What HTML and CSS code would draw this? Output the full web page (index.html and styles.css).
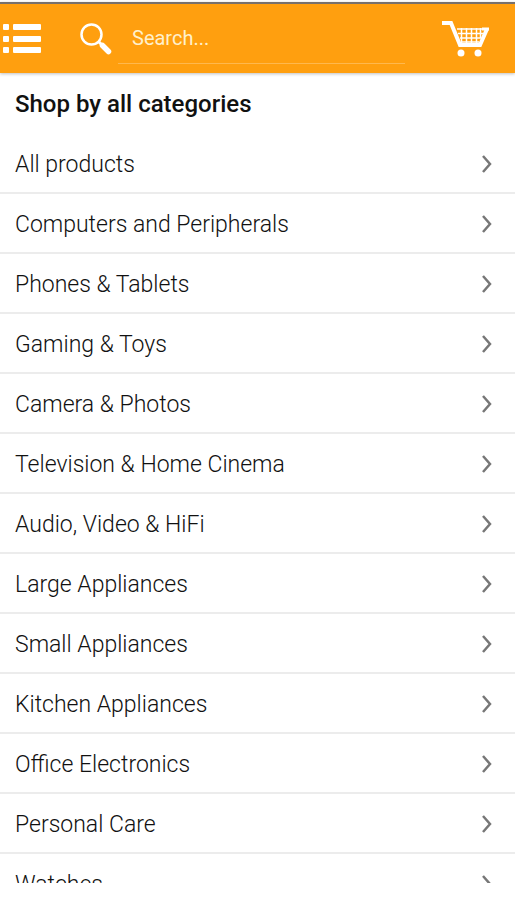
FILE: index.html
```html
<!DOCTYPE html>
<html lang="en">
<head>
  <meta charset="UTF-8" />
  <meta name="viewport" content="width=device-width, initial-scale=1.0" />
  <title>Shop by all categories</title>
  <link rel="stylesheet" href="styles.css">
</head>
<body>
  <header class="topbar">
    <button class="icon-btn menu-btn" type="button" aria-label="Menu">
      <svg width="38" height="30" viewBox="0 0 38 30" fill="#fff">
        <rect x="0" y="0" width="6" height="6" rx="1" />
        <rect x="10" y="0" width="28" height="6" rx="1" />
        <rect x="0" y="12" width="6" height="6" rx="1" />
        <rect x="10" y="12" width="28" height="6" rx="1" />
        <rect x="0" y="23" width="6" height="6" rx="1" />
        <rect x="10" y="23" width="28" height="6" rx="1" />
      </svg>
    </button>
    <form class="search">
      <button class="icon-btn" type="submit" aria-label="Submit search">
        <svg width="32" height="32" viewBox="0 0 32 32" fill="none" stroke="#fff">
          <circle cx="11.5" cy="11.5" r="10" stroke-width="2.5" />
          <path d="M18.5 18.5l4 4" stroke-width="3" />
          <path d="M22.5 22.5l6 6" stroke-width="5.500" stroke-linecap="round" />
        </svg>
      </button>
      <input class="search-input" type="text" placeholder="Search..." aria-label="Search" />
    </form>
    <button class="icon-btn cart-btn" type="button" aria-label="Cart">
      <svg width="48" height="37" viewBox="0 0 48 37" fill="none" stroke="#fff">
        <path d="M0 3h9l9 22h20l7-16" stroke-width="4" />
        <path d="M40 9h7" stroke-width="3" />
        <path d="M15 9h27M16 13.500h25M18 18h21M19 22h18" stroke-width="1.500" />
        <path d="M19.500 8v15M24.500 8v15M29.500 8v15M34.500 8v15M38.500 8v10" stroke-width="1.500" />
        <circle cx="19" cy="33" r="3.500" fill="#fff" stroke="none" />
        <circle cx="36" cy="33" r="3.500" fill="#fff" stroke="none" />
      </svg>
    </button>
  </header>

  <main class="content">
    <h1 class="title">Shop by all categories</h1>
    <ul class="categories" id="categories">
      <li><a href="#">All products</a></li>
      <li><a href="#">Computers and Peripherals</a></li>
      <li><a href="#">Phones &amp; Tablets</a></li>
      <li><a href="#">Gaming &amp; Toys</a></li>
      <li><a href="#">Camera &amp; Photos</a></li>
      <li><a href="#">Television &amp; Home Cinema</a></li>
      <li><a href="#">Audio, Video &amp; HiFi</a></li>
      <li><a href="#">Large Appliances</a></li>
      <li><a href="#">Small Appliances</a></li>
      <li><a href="#">Kitchen Appliances</a></li>
      <li><a href="#">Office Electronics</a></li>
      <li><a href="#">Personal Care</a></li>
      <li><a href="#">Watches</a></li>
    </ul>
  </main>

  <script>
    // Add the arrow to the end of every category row.
    const arrow =
      '<svg class="arrow" width="12" height="20" viewBox="0 0 12 20" aria-hidden="true">' +
      '<path d="M2 2l7 8-7 8" /></svg>';

    document.querySelectorAll("#categories a").forEach((link) => {
      link.insertAdjacentHTML("beforeend", arrow);
    });
  </script>
</body>
</html>
```

FILE: styles.css
```css
* {
  box-sizing: border-box;
}
body {
  font-family: Roboto, sans-serif;
  background: #fff;
  color: #111;
  margin: 0;
  padding: 2px 0 17px;
  height: 100vh;
  display: flex;
  flex-direction: column;
}
/* Top bar */
.topbar {
  flex: none;
  display: flex;
  align-items: center;
  height: 71px;
  padding: 0 25px 0 3px;
  background: #ff9f0f;
  border-top: 2px solid #77706c;
  box-shadow: 0 1px 3px rgba(0, 0, 0, 0.25);
}
.icon-btn {
  flex: none;
  display: flex;
  padding: 0;
  border: none;
  background: none;
  cursor: pointer;
}
.menu-btn {
  margin-right: 39px;
}
.search {
  flex: 1;
  min-width: 0;
  display: flex;
  align-items: center;
}
.search-input {
  flex: 1;
  min-width: 0;
  height: 50px;
  margin: 0 37px 0 6px;
  padding: 0 14px;
  border: none;
  border-bottom: 1px solid #ffb84d;
  background: none;
  color: #fff;
  font-family: inherit;
  font-size: 20px;
  outline: none;
}
.search-input::placeholder {
  color: #fff0cc;
  opacity: 1;
}
/* Category list */
.content {
  flex: 1;
  min-height: 0;
  overflow: hidden;
}
.title {
  margin: 0;
  padding: 2px 15px 0;
  font-size: 24px;
  font-weight: 500;
  line-height: 59px;
}
.categories {
  margin: 0;
  padding: 0;
  list-style: none;
}
.categories a {
  display: flex;
  align-items: center;
  justify-content: space-between;
  height: 60px;
  padding: 2px 22px 0 15px;
  border-bottom: 2px solid #ececec;
  color: inherit;
  font-size: 23px;
  font-weight: 300;
  text-decoration: none;
}
.arrow {
  flex: none;
  fill: none;
  stroke: #777;
  stroke-width: 2.5;
}
```
